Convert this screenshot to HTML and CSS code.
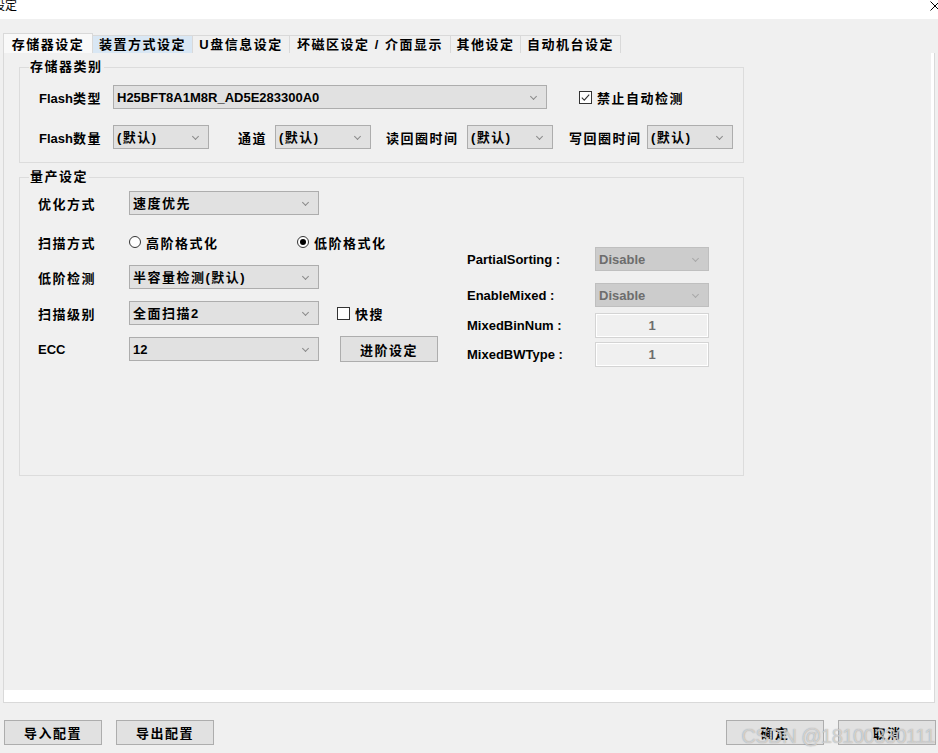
FILE: index.html
```html
<!DOCTYPE html>
<html>

<head>
    <title>设定</title>
    <link rel="stylesheet" href="styles.css">
</head>

<body>
    <div class="titlebar">
        <span class="title">设定</span>
        <svg class="closeIcon" width="10" height="10" viewBox="0 0 10 10">
            <path d="M0.5 0.5 L9.5 9.5 M9.5 0.5 L0.5 9.5" stroke="#000" stroke-width="1" fill="none" />
        </svg>
    </div>

    <div class="tabs">
        <div class="tab tab--active cn" style="width: 90px">存储器设定</div>
        <div class="tab tab--hover cn" style="width: 100px">装置方式设定</div>
        <div class="tab cn" style="width: 97px">U盘信息设定</div>
        <div class="tab cn" style="width: 161px">坏磁区设定 / 介面显示</div>
        <div class="tab cn" style="width: 70px">其他设定</div>
        <div class="tab cn" style="width: 100px">自动机台设定</div>
    </div>

    <div class="panel">
        <div class="page">
            <div class="group group--storage">
                <span class="groupTitle cn">存储器类别</span>

                <div class="row">
                    <span class="label" style="width: 74px">Flash<span class="cn">类型</span></span>
                    <div class="select" style="width: 434px">H25BFT8A1M8R_AD5E283300A0</div>
                    <span class="check check--flash">
                        <svg width="13" height="13" viewBox="0 0 13 13">
                            <rect x="0.5" y="0.5" width="12" height="12" fill="#fff" stroke="#333" />
                            <path d="M2.8 6.6 L5.3 9.1 L10.2 3.6" stroke="#333" stroke-width="1.1" fill="none" />
                        </svg>
                        <span class="cn">禁止自动检测</span>
                    </span>
                </div>

                <div class="row row--second">
                    <span class="label" style="width: 74px">Flash<span class="cn">数量</span></span>
                    <div class="select cn" style="width: 96px">(默认)</div>
                    <span class="label cn" style="width: 37px; margin-left: 29px">通道</span>
                    <div class="select cn" style="width: 96px">(默认)</div>
                    <span class="label cn" style="width: 81px; margin-left: 15px">读回圈时间</span>
                    <div class="select cn" style="width: 86px">(默认)</div>
                    <span class="label cn" style="width: 78px; margin-left: 16px">写回圈时间</span>
                    <div class="select cn" style="width: 86px">(默认)</div>
                </div>
            </div>

            <div class="group group--production">
                <span class="groupTitle cn">量产设定</span>

                <div class="columns">
                    <div class="leftColumn">
                        <div class="row">
                            <span class="label cn" style="width: 91px">优化方式</span>
                            <div class="select cn" style="width: 190px">速度优先</div>
                        </div>

                        <div class="row" style="margin-top: 15px">
                            <span class="label cn" style="width: 91px">扫描方式</span>
                            <span class="radio" style="width: 168px">
                                <svg width="12" height="12" viewBox="0 0 12 12">
                                    <circle cx="6" cy="6" r="5.5" fill="#fff" stroke="#333" />
                                </svg>
                                <span class="cn">高阶格式化</span>
                            </span>
                            <span class="radio">
                                <svg width="12" height="12" viewBox="0 0 12 12">
                                    <circle cx="6" cy="6" r="5.5" fill="#fff" stroke="#333" />
                                    <circle cx="6" cy="6" r="3" fill="#000" />
                                </svg>
                                <span class="cn">低阶格式化</span>
                            </span>
                        </div>

                        <div class="row" style="margin-top: 11px">
                            <span class="label cn" style="width: 91px">低阶检测</span>
                            <div class="select cn" style="width: 190px">半容量检测(默认)</div>
                        </div>

                        <div class="row" style="margin-top: 12px">
                            <span class="label cn" style="width: 91px">扫描级别</span>
                            <div class="select" style="width: 190px"><span class="cn">全面扫描</span>2</div>
                            <span class="check check--fast">
                                <svg width="13" height="13" viewBox="0 0 13 13">
                                    <rect x="0.5" y="0.5" width="12" height="12" fill="#fff" stroke="#333" />
                                </svg>
                                <span class="cn">快搜</span>
                            </span>
                        </div>

                        <div class="row" style="margin-top: 12px">
                            <span class="label" style="width: 91px">ECC</span>
                            <div class="select" style="width: 190px">12</div>
                            <button class="button button--advanced cn">进阶设定</button>
                        </div>
                    </div>

                    <div class="rightColumn">
                        <div class="row">
                            <span class="label" style="width: 128px">PartialSorting :</span>
                            <div class="select select--disabled" style="width: 114px">Disable</div>
                        </div>
                        <div class="row" style="margin-top: 12px">
                            <span class="label" style="width: 128px">EnableMixed :</span>
                            <div class="select select--disabled" style="width: 114px">Disable</div>
                        </div>
                        <div class="row row--input" style="margin-top: 6px">
                            <span class="label" style="width: 128px">MixedBinNum :</span>
                            <div class="numberBox">1</div>
                        </div>
                        <div class="row row--input" style="margin-top: 4px">
                            <span class="label" style="width: 128px">MixedBWType :</span>
                            <div class="numberBox">1</div>
                        </div>
                    </div>
                </div>
            </div>
        </div>
    </div>

    <div class="footer">
        <button class="button cn">导入配置</button>
        <button class="button button--gap cn">导出配置</button>
        <div class="footerRight">
            <button class="button cn">确定</button>
            <button class="button button--gap cn">取消</button>
        </div>
    </div>

    <div class="watermark">CSDN @18100330111</div>
</body>

</html>
```

FILE: styles.css
```css
* {
    box-sizing: border-box;
}

body {
    margin: 0;
    width: 938px;
    height: 753px;
    overflow: hidden;
    position: relative;
    background-color: #f0f0f0;
    color: #000;
    font: bold 13px "Liberation Sans", "Noto Sans CJK SC", sans-serif;
}

.cn {
    letter-spacing: 1.5px;
}

/* title bar */
.titlebar {
    height: 19px;
    background-color: #fff;
    display: flex;
    justify-content: space-between;
}

.title {
    font-weight: normal;
    font-size: 12px;
    line-height: 12px;
    margin-left: -7px;
}

.closeIcon {
    margin-top: 1px;
    margin-right: -2px;
}

/* tabs */
.tabs {
    display: flex;
    align-items: flex-end;
    height: 20px;
    margin-top: 14px;
    padding-left: 3px;
}

.tab {
    height: 18px;
    border: 1px solid #d9d9d9;
    border-left: none;
    border-bottom: none;
    padding-top: 1px;
    line-height: 16px;
    text-align: center;
    white-space: nowrap;
    overflow: hidden;
}

.tab--active {
    height: 20px;
    padding-top: 3px;
    border-left: 1px solid #d9d9d9;
    background-color: #f9f9f9;
}

.tab--hover {
    background-color: #d9e7f4;
}

/* tab panel */
.panel {
    margin-left: 3px;
    width: 932px;
    height: 650px;
    background-color: #fff;
    border: 1px solid #d9d9d9;
    border-top: none;
    padding: 0 3px 12px 0;
}

.page {
    height: 637px;
    background-color: #f0f0f0;
    padding: 14px 0 0 15px;
}

.group {
    position: relative;
    width: 725px;
    border: 1px solid #dcdcdc;
}

.group--storage {
    padding: 17px 0 13px 19px;
}

.group--production {
    margin-top: 14px;
    height: 299px;
    padding: 13px 0 0 18px;
}

.groupTitle {
    position: absolute;
    top: -9px;
    left: 9px;
    padding: 0 1px;
    line-height: 16px;
    background-color: #f0f0f0;
}

.row {
    display: flex;
    align-items: center;
    height: 24px;
}

.row--second {
    margin-top: 16px;
}

.row--input {
    height: 25px;
}

.label {
    white-space: nowrap;
}

.select {
    position: relative;
    height: 24px;
    border: 1px solid #adadad;
    background-color: #e1e1e1;
    padding-left: 3px;
    line-height: 23px;
    white-space: nowrap;
}

.select::after {
    content: "";
    position: absolute;
    right: 10px;
    top: 8px;
    width: 4px;
    height: 4px;
    border-right: 1px solid #8a8a8a;
    border-bottom: 1px solid #8a8a8a;
    transform: rotate(45deg);
}

.select--disabled {
    background-color: #cccccc;
    border-color: #bfbfbf;
    color: #6d6d6d;
}

.select--disabled::after {
    border-color: #a8a8a8;
}

.numberBox {
    width: 114px;
    height: 25px;
    border: 1px solid #d4d4d4;
    box-shadow: inset 0 0 0 1px #fff;
    color: #6d6d6d;
    text-align: center;
    line-height: 23px;
}

.check,
.radio {
    display: flex;
    align-items: center;
    white-space: nowrap;
}

.check svg {
    margin-right: 5px;
}

.radio svg {
    margin-right: 5px;
}

.check--flash {
    margin-left: 32px;
}

.check--fast {
    margin-left: 18px;
}

.radio:first-of-type {
    margin-left: 1px;
}

.columns {
    display: flex;
}

.leftColumn {
    width: 400px;
}

.rightColumn {
    margin-left: 29px;
    padding-top: 56px;
}

/* buttons */
.button {
    width: 98px;
    height: 25px;
    border: 1px solid #adadad;
    background-color: #e1e1e1;
    font: inherit;
    letter-spacing: 1.5px;
    color: #000;
    padding: 0;
}

.button--advanced {
    height: 26px;
    margin-left: 21px;
}

.button--gap {
    margin-left: 14px;
}

.footer {
    display: flex;
    margin-top: 17px;
    padding: 0 2px 0 4px;
}

.footerRight {
    margin-left: auto;
    display: flex;
}

.watermark {
    position: absolute;
    right: 3px;
    bottom: 5px;
    font: normal 20px "Liberation Sans", sans-serif;
    letter-spacing: -0.5px;
    color: rgba(255, 255, 255, 0.55);
    text-shadow: 0 0 1px rgba(120, 120, 120, 0.8);
    white-space: nowrap;
}
```
